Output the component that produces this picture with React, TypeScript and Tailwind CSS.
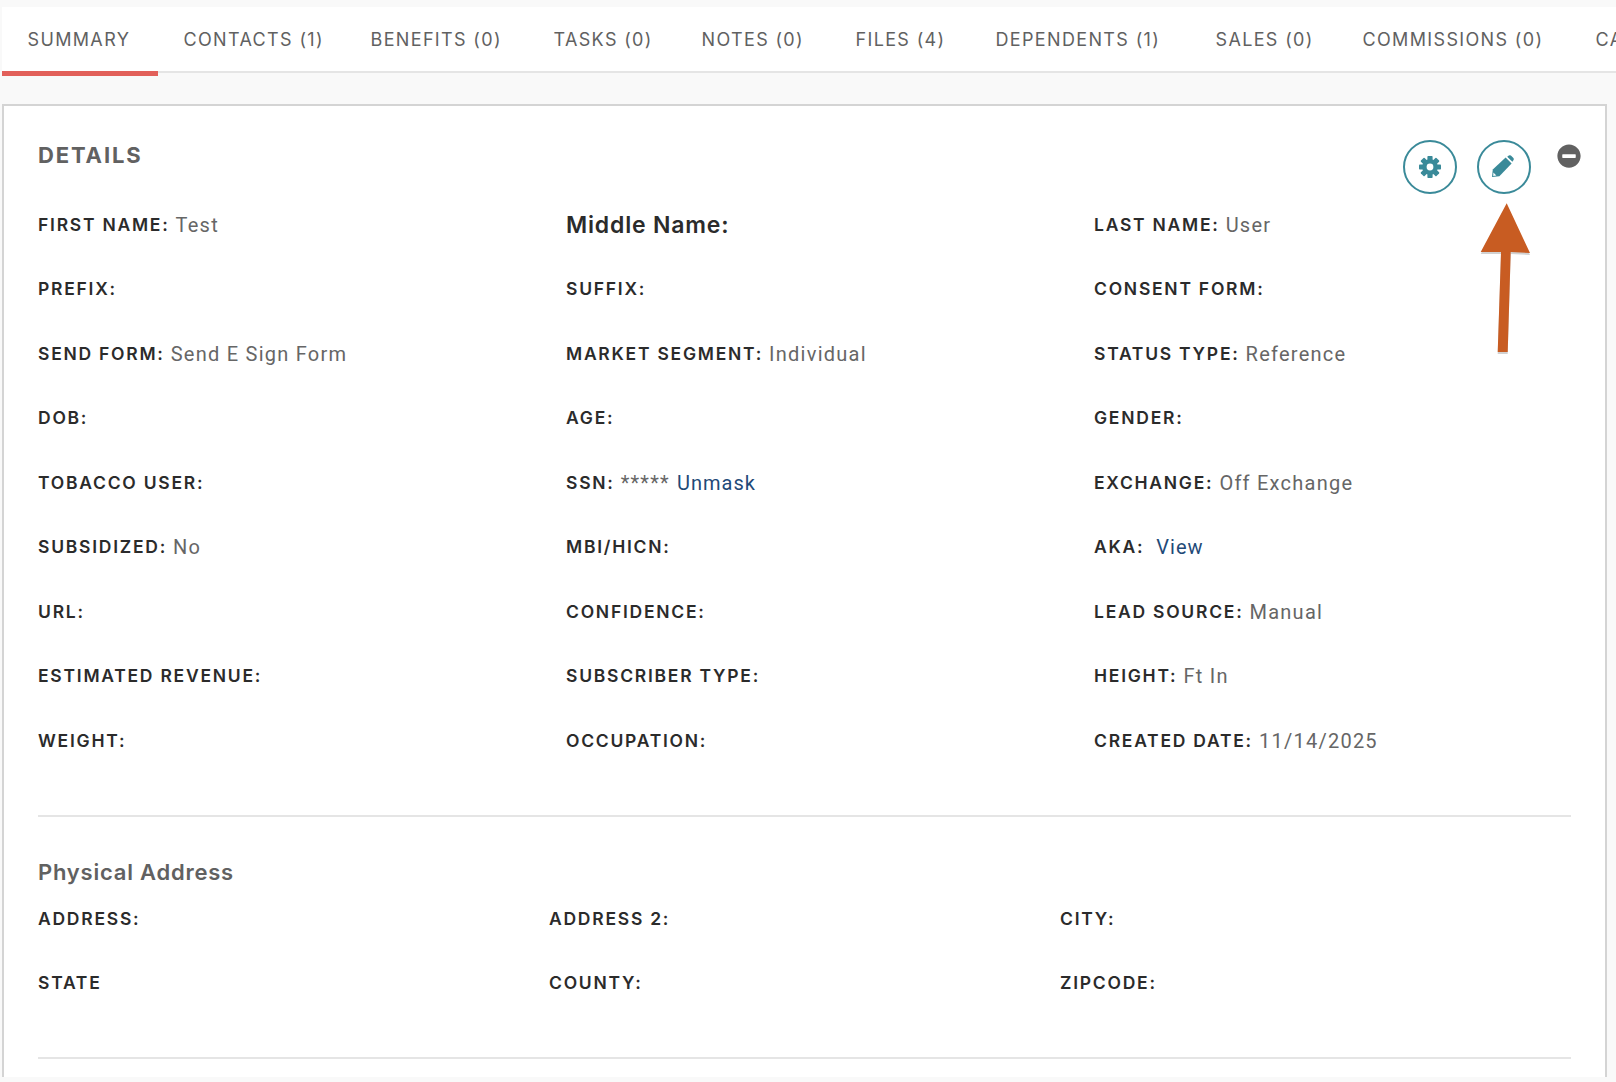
import { FaMinusCircle } from 'react-icons/fa';

const tabs = [
  { label: 'SUMMARY', width: 'w-[156px]' },
  { label: 'CONTACTS (1)', width: 'w-[187px]' },
  { label: 'BENEFITS (0)', width: 'w-[183px]' },
  { label: 'TASKS (0)', width: 'w-[148px]' },
  { label: 'NOTES (0)', width: 'w-[154px]' },
  { label: 'FILES (4)', width: 'w-[140px]' },
  { label: 'DEPENDENTS (1)', width: 'w-[220px]' },
  { label: 'SALES (0)', width: 'w-[147px]' },
  { label: 'COMMISSIONS (0)', width: 'w-[233px]' },
  { label: 'CA', width: 'w-[60px]' },
];

type Field = { label: string; value?: string; link?: string };

const details: Field[] = [
  { label: 'FIRST NAME:', value: 'Test' },
  { label: 'Middle Name:' },
  { label: 'LAST NAME:', value: 'User' },
  { label: 'PREFIX:' },
  { label: 'SUFFIX:' },
  { label: 'CONSENT FORM:' },
  { label: 'SEND FORM:', value: 'Send E Sign Form' },
  { label: 'MARKET SEGMENT:', value: 'Individual' },
  { label: 'STATUS TYPE:', value: 'Reference' },
  { label: 'DOB:' },
  { label: 'AGE:' },
  { label: 'GENDER:' },
  { label: 'TOBACCO USER:' },
  { label: 'SSN:', value: '*****', link: 'Unmask' },
  { label: 'EXCHANGE:', value: 'Off Exchange' },
  { label: 'SUBSIDIZED:', value: 'No' },
  { label: 'MBI/HICN:' },
  { label: 'AKA:', link: 'View' },
  { label: 'URL:' },
  { label: 'CONFIDENCE:' },
  { label: 'LEAD SOURCE:', value: 'Manual' },
  { label: 'ESTIMATED REVENUE:' },
  { label: 'SUBSCRIBER TYPE:' },
  { label: 'HEIGHT:', value: 'Ft In' },
  { label: 'WEIGHT:' },
  { label: 'OCCUPATION:' },
  { label: 'CREATED DATE:', value: '11/14/2025' },
];

const address = ['ADDRESS:', 'ADDRESS 2:', 'CITY:', 'STATE', 'COUNTY:', 'ZIPCODE:'];

function FieldRow({ field }: { field: Field }) {
  if (field.label === 'Middle Name:') {
    return (
      <div className="flex h-[64.5px] items-center text-[23px] font-semibold tracking-[0.035em] text-[#2b2b2b]">
        {field.label}
      </div>
    );
  }
  return (
    <div className="flex h-[64.5px] items-center whitespace-pre text-[17.5px]">
      <span className="font-semibold tracking-[0.1em] text-[#2b2b2b]">{field.label}</span>
      {field.value && <span className="ml-[6px] font-['Roboto',sans-serif] text-[20px] tracking-[0.0625em] text-[#666666]">{field.value}</span>}
      {field.link && (
        <span className={field.value ? "ml-[7px] font-['Roboto',sans-serif] text-[20px] tracking-[0.05em] text-[#1f4a78]" : "ml-[12px] font-['Roboto',sans-serif] text-[20px] tracking-[0.05em] text-[#1f4a78]"}>
          {field.link}
        </span>
      )}
    </div>
  );
}

function RoundButton({ children }: { children: React.ReactNode }) {
  return (
    <button className="flex h-[54px] w-[54px] items-center justify-center rounded-full border-2 border-[#3a8a99] text-[#3a8a99]">
      {children}
    </button>
  );
}

function CogIcon() {
  return (
    <svg width="22" height="22" viewBox="0 0 22 22" fill="currentColor">
      {[0, 45, 90, 135].map((angle) => (
        <rect key={angle} x="8.4" y="0" width="5.2" height="22" rx="0.8" transform={`rotate(${angle} 11 11)`} />
      ))}
      <circle cx="11" cy="11" r="7.8" />
      <circle cx="11" cy="11" r="3.4" fill="#ffffff" />
    </svg>
  );
}

function PencilIcon() {
  return (
    <svg className="-translate-x-px -translate-y-px" width="22" height="22" viewBox="0 0 22 22" fill="currentColor">
      <path d="M0 22 L0.8 14.6 L13.6 2.6 L19.6 8.6 L7.4 21.2 Z" />
      <path d="M15.2 1.8 L16.8 0.6 Q17.8 -0.2 18.9 0.6 L21.4 3.1 Q22.2 4.2 21.4 5.2 L20.4 6.8 Z" />
      <path d="M1.4 17.6 L4.4 20.6 L1.2 21 Z" fill="#ffffff" />
    </svg>
  );
}

export default function App() {
  return (
    <div className="relative h-[1082px] w-full overflow-hidden bg-[#f9f9f9] pl-[2px] pt-[7px] font-['Inter',sans-serif]">
      <nav className="flex h-[66px] border-b-2 border-[#e5e5e5] bg-white">
        {tabs.map((tab, i) => (
          <div key={tab.label} className={`${tab.width} relative shrink-0 whitespace-nowrap pl-[25.5px] pt-[19px] text-[18px] tracking-[0.075em] text-[#616161]`}>
            {tab.label}
            {i === 0 && <span className="absolute bottom-[-5px] left-0 h-[5px] w-full bg-[#e2605a]" />}
          </div>
        ))}
      </nav>

      <section className="mt-[31px] mr-[9px] h-[973px] border-2 border-b-0 border-[#d4d4d4] bg-white px-[34px]">
        <header className="flex h-[86.5px] items-start">
          <h2 className="mt-[35px] text-[22px] font-bold leading-[28px] tracking-[0.085em] text-[#616161]">DETAILS</h2>
          <div className="ml-auto mt-[34px] flex gap-[20px]">
            <RoundButton><CogIcon /></RoundButton>
            <RoundButton><PencilIcon /></RoundButton>
          </div>
          <FaMinusCircle className="ml-[26px] mr-[-10px] mt-[38px] shrink-0 text-[24px] text-[#616161]" />
        </header>

        <div className="grid grid-cols-[528px_528px_1fr]">
          {details.map((field) => <FieldRow key={field.label} field={field} />)}
        </div>

        <hr className="mt-[42px] border-t-2 border-[#e5e5e5]" />
        <h3 className="mt-[41px] text-[22px] font-semibold leading-[28px] tracking-[0.035em] text-[#616161]">Physical Address</h3>

        <div className="mt-[1px] grid grid-cols-3">
          {address.map((label) => (
            <div key={label} className="flex h-[64px] items-center text-[17.5px] font-semibold tracking-[0.1em] text-[#2b2b2b]">{label}</div>
          ))}
        </div>

        <hr className="mt-[42px] border-t-2 border-[#e5e5e5]" />
      </section>

      <svg className="absolute left-[1470px] top-[195px]" width="70" height="170" viewBox="0 0 70 170">
        <path d="M36.7 8.3 L60 58 L40.7 57 L37.7 157 L27.7 157 L31 57 L10.7 57 Z" fill="#000" opacity="0.18" transform="translate(0 2)" />
        <path d="M36.7 8.3 L60 58 L40.7 57 L37.7 157 L27.7 157 L31 57 L10.7 57 Z" fill="#c85c22" />
      </svg>
    </div>
  );
}
